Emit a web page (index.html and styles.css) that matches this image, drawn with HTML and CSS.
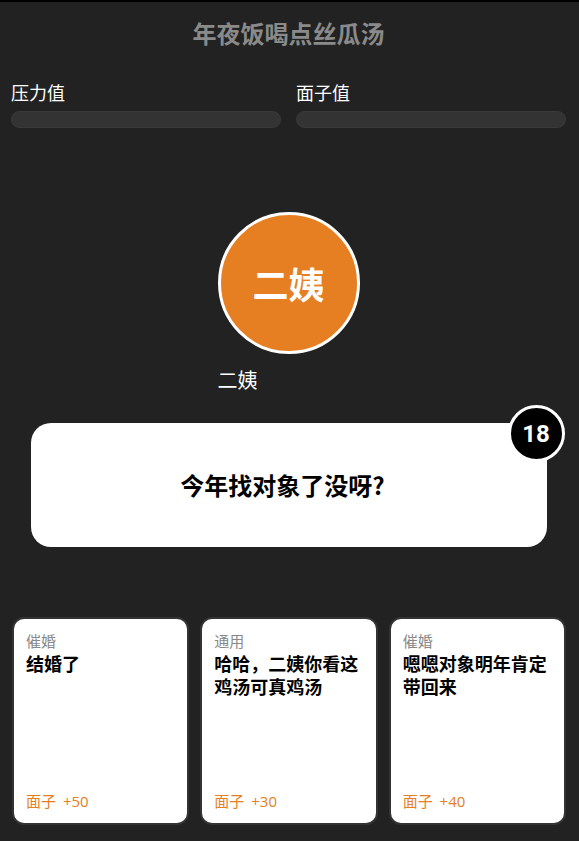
FILE: index.html
```html
<!DOCTYPE html>
<html lang="zh-CN">
<head>
<meta charset="utf-8">
<title>年夜饭喝点丝瓜汤</title>
<link rel="stylesheet" href="styles.css">
</head>
<body>
<div class="topbar"></div>
<div class="page">
  <h1 class="title">年夜饭喝点丝瓜汤</h1>
  <div class="stats">
    <div class="stat">
      <div class="stat-label">压力值</div>
      <div class="bar"></div>
    </div>
    <div class="stat">
      <div class="stat-label">面子值</div>
      <div class="bar"></div>
    </div>
  </div>
  <div class="person">
    <div class="person-box">
      <div class="avatar">二姨</div>
      <div class="person-name">二姨</div>
    </div>
  </div>
  <div class="question">
    <div class="question-text">今年找对象了没呀?</div>
    <div class="timer">18</div>
  </div>
</div>
<div class="answers">
  <div class="answer">
    <div class="answer-cat">催婚</div>
    <div class="answer-text">结婚了</div>
    <div class="answer-effect">面子 +50</div>
  </div>
  <div class="answer">
    <div class="answer-cat">通用</div>
    <div class="answer-text">哈哈，二姨你看这鸡汤可真鸡汤</div>
    <div class="answer-effect">面子 +30</div>
  </div>
  <div class="answer">
    <div class="answer-cat">催婚</div>
    <div class="answer-text">嗯嗯对象明年肯定带回来</div>
    <div class="answer-effect">面子 +40</div>
  </div>
</div>
</body>
</html>
```
FILE: styles.css
```css
* { box-sizing: border-box; }
html, body {
  margin: 0;
  padding: 0;
  background: #222222;
  height: 841px;
  overflow: hidden;
}
body {
  font-family: "Noto Sans CJK SC", "Noto Sans", "Liberation Sans", sans-serif;
  color: #ffffff;
}
.topbar {
  height: 2px;
  background: #000000;
}
.page {
  padding: 0 13px 0 11px;
}
.title {
  margin: 0;
  padding-top: 15px;
  text-align: center;
  font-size: 24px;
  line-height: 32px;
  font-weight: 700;
  color: #8a8a8a;
}
.stats {
  margin-top: 31px;
  display: grid;
  grid-template-columns: 1fr 1fr;
  column-gap: 15px;
}
.stat-label {
  font-size: 18px;
  line-height: 24px;
  color: #ffffff;
}
.bar {
  margin-top: 7px;
  height: 17px;
  border-radius: 9px;
  background: #333333;
  border: 1px solid #3a3a3a;
}
.person {
  margin-top: 84px;
  display: flex;
  justify-content: center;
}
.person-box {
  display: flex;
  flex-direction: column;
  align-items: flex-start;
}
.avatar {
  width: 142px;
  height: 142px;
  border-radius: 50%;
  background: #e67e22;
  border: 3px solid #ffffff;
  display: flex;
  align-items: center;
  justify-content: center;
  font-size: 36px;
  font-weight: 700;
  color: #ffffff;
}
.person-name {
  margin-top: 12px;
  font-size: 20px;
  line-height: 28px;
  color: #ffffff;
}
.question {
  position: relative;
  margin: 29px auto 0;
  width: 516px;
  height: 124px;
  background: #ffffff;
  border-radius: 20px;
  display: flex;
  align-items: center;
  justify-content: center;
  padding-right: 12px;
}
.question-text {
  font-size: 24px;
  line-height: 32px;
  font-weight: 700;
  color: #000000;
}
.timer {
  position: absolute;
  top: -18px;
  right: -18px;
  width: 57px;
  height: 57px;
  border-radius: 50%;
  background: #000000;
  border: 3px solid #ffffff;
  display: flex;
  align-items: center;
  justify-content: center;
  font-family: "Roboto", "Liberation Sans", sans-serif;
  font-size: 24px;
  font-weight: 700;
  color: #ffffff;
}
.answers {
  margin-top: 70px;
  padding: 0 13px 0 12px;
  display: grid;
  grid-template-columns: repeat(3, 1fr);
  column-gap: 11px;
}
.answer {
  height: 208px;
  background: #ffffff;
  border: 2px solid #333333;
  border-radius: 12px;
  padding: 12px;
  display: flex;
  flex-direction: column;
}
.answer-cat {
  font-size: 15px;
  line-height: 20px;
  color: #888888;
}
.answer-text {
  margin-top: 1px;
  font-size: 18px;
  line-height: 23px;
  font-weight: 700;
  color: #000000;
}
.answer-effect {
  margin-top: auto;
  font-family: "Open Sans", "Noto Sans CJK SC", sans-serif;
  font-size: 15px;
  line-height: 20px;
  word-spacing: 3px;
  color: #e67e22;
}
```
